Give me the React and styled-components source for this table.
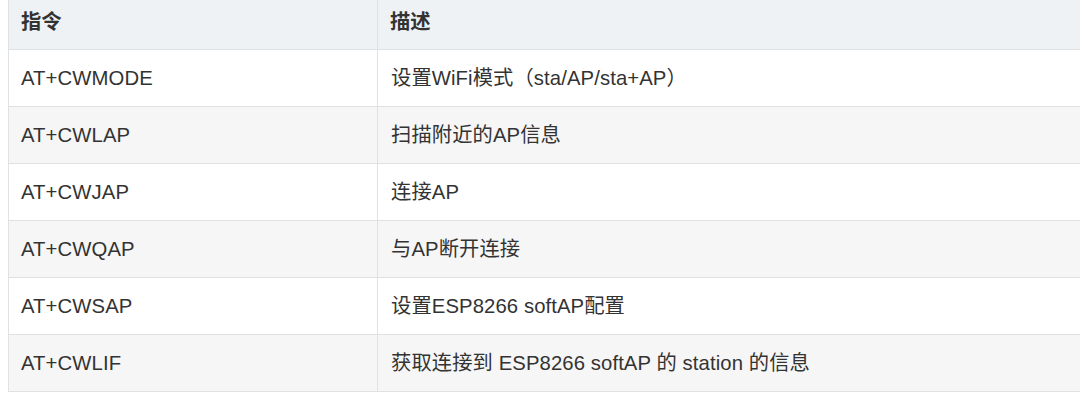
import React from 'react';
import styled, { createGlobalStyle } from 'styled-components';

const GlobalStyle = createGlobalStyle`
  html, body {
    margin: 0;
    background: #fff;
    overflow: hidden;
  }
  body {
    padding: 0 0 0 8px;
  }
`;

const Table = styled.table`
  width: 1100px;
  border-collapse: collapse;
  font-family: "Liberation Sans", Arial, "Noto Sans CJK SC", sans-serif;
  font-size: 20.3px;
  color: #333;
  table-layout: fixed;
`;

const HeadCell = styled.th`
  background: #eef2f5;
  font-weight: 700;
  text-align: left;
  height: 49px;
  padding: 0 12px 4px 12px;
  line-height: 28px;
  border: 1px solid #dfe2e5;
  border-top: none;
  box-sizing: border-box;
  color: #333;
  width: ${p => p.$width || 'auto'};
`;

const Row = styled.tr`
  background: ${p => (p.$striped ? '#f6f6f6' : '#fff')};
`;

const Cell = styled.td`
  height: 57px;
  padding: 0 12px;
  line-height: 28px;
  border: 1px solid #dfe2e5;
  box-sizing: border-box;
  white-space: nowrap;
  color: #333;
  letter-spacing: 0.1px;
  & + & {
    padding-left: 13px;
  }
`;

const commands = [
  { cmd: 'AT+CWMODE', desc: '设置WiFi模式（sta/AP/sta+AP）' },
  { cmd: 'AT+CWLAP', desc: '扫描附近的AP信息' },
  { cmd: 'AT+CWJAP', desc: '连接AP' },
  { cmd: 'AT+CWQAP', desc: '与AP断开连接' },
  { cmd: 'AT+CWSAP', desc: '设置ESP8266 softAP配置' },
  { cmd: 'AT+CWLIF', desc: '获取连接到 ESP8266 softAP 的 station 的信息' },
];

const App = () => (
  <>
    <GlobalStyle />
    <Table>
      <thead>
        <tr>
          <HeadCell $width="369px">指令</HeadCell>
          <HeadCell>描述</HeadCell>
        </tr>
      </thead>
      <tbody>
        {commands.map((c, i) => (
          <Row key={c.cmd} $striped={i % 2 === 1}>
            <Cell>{c.cmd}</Cell>
            <Cell>{c.desc}</Cell>
          </Row>
        ))}
      </tbody>
    </Table>
  </>
);

export default App;
